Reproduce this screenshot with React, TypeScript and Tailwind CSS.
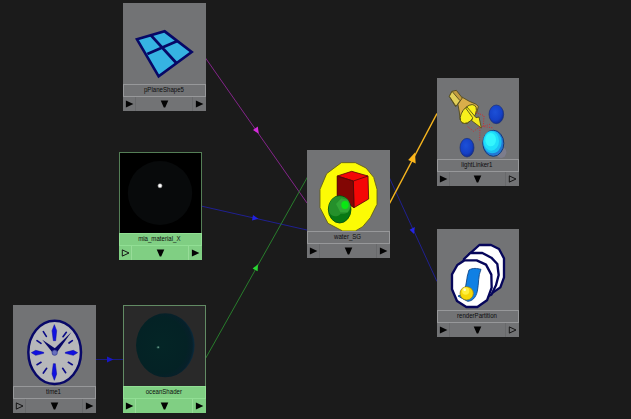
import type { ReactNode } from "react";

type NodeProps = {
  place: string;
  label: string;
  view: string;
  selected?: boolean;
  openLeft?: boolean;
  openRight?: boolean;
  art: string;
  children: ReactNode;
};

function Arrow({ open, down }: { open?: boolean; down?: boolean }) {
  return (
    <svg width="9" height="8" viewBox="0 0 9 8" className="block shrink-0">
      <path
        d={down ? "M0.7 0.5H8.3L5.2 7.6H3.8Z" : open ? "M1.3 0.9L8 4L1.3 7.1Z" : "M0.9 0.4L8.4 4L0.9 7.6Z"}
        fill={open ? "none" : "#030303"}
        stroke={open ? "#161616" : "none"}
        strokeWidth="1"
      />
    </svg>
  );
}

function GraphNode({ place, label, view, selected, openLeft, openRight, art, children }: NodeProps) {
  const body = selected ? "bg-[#80cf83]" : "bg-[#727375]";
  const edge = selected ? "border-[#91df94]" : "border-[#97989a]";
  const split = selected ? "border-[#97dc98]" : "border-[#68696b]";
  return (
    <section className={`absolute flex h-[108px] flex-col ${place} ${body}`}>
      <div className={`h-[81px] shrink-0 ${art}`}>
        <svg viewBox={view} width="100%" height="81" preserveAspectRatio="none" className="block">
          {children}
        </svg>
      </div>
      <div className={`flex h-[13px] shrink-0 items-center justify-center border ${edge}`}>
        <span className="relative -left-px -top-px scale-x-[0.87] whitespace-nowrap text-[7px] leading-none text-[#0c0d0e]">{label}</span>
      </div>
      <div className="flex h-[14px] items-stretch">
        <div className={`flex w-[13px] items-center justify-center border-r ${split}`}>
          <Arrow open={openLeft} />
        </div>
        <div className="flex flex-1 items-center justify-center">
          <Arrow down />
        </div>
        <div className={`flex w-[14px] items-center justify-center border-l pr-px ${split}`}>
          <Arrow open={openRight} />
        </div>
      </div>
    </section>
  );
}

function Connections() {
  return (
    <svg className="absolute inset-0" width="631" height="419" viewBox="0 0 631 419" fill="none">
      <g strokeWidth="1">
        <path d="M205.5 58L307 203" stroke="#84258a" />
        <path d="M201 206L307 230" stroke="#202090" />
        <path d="M205.5 358.5L307.5 177" stroke="#287d2c" />
        <path d="M95 359.5H123" stroke="#1b1b83" />
        <path d="M389.5 178L437 281.5" stroke="#202090" />
      </g>
      <path d="M389.5 203.5L437 113.5" stroke="#f6b51f" strokeWidth="1.5" />
      <path d="M258.8 133.8L253 130L257.8 126.5Z" fill="#d42bdb" />
      <path d="M258.5 218.8L252 220.4L253 215Z" fill="#2222e2" />
      <path d="M258 264.2L252.6 268.5L257.6 271.3Z" fill="#29d732" />
      <path d="M113.5 359.5L107 362.5V356.5Z" fill="#1818c4" />
      <path d="M415 152.5L408.2 160L415.7 163.5Z" fill="#fbb51b" />
      <path d="M414 234L409.6 229.7L414.8 227Z" fill="#2525e4" />
    </svg>
  );
}

function PlaneArt() {
  return (
    <g stroke="#070866" strokeWidth="8" strokeLinejoin="miter">
      <path d="M66 118L149 94L230 156L131 229Z" fill="#36b3e2" />
      <path d="M108 106L184 189M97 162L187 123" fill="none" strokeWidth="8.5" />
    </g>
  );
}

function MaterialArt() {
  return (
    <>
      <ellipse cx="150" cy="141" rx="99" ry="96" fill="#080a0b" />
      <circle cx="150" cy="119" r="7.5" fill="#777" />
      <circle cx="150" cy="119" r="5.3" fill="#fff" />
    </>
  );
}

function ClockArt() {
  return (
    <>
      <ellipse cx="149" cy="157" rx="79" ry="95" fill="#b7b8ba" stroke="#080868" strokeWidth="7.5" />
      <g fill="#1010e0" stroke="#0a0aa0" strokeWidth="1.5">
        <path d="M148 74L155 92L152 122H145L141 92Z" />
        <path d="M148 241L155 222L151 191H145L141 222Z" />
        <path d="M79 158L92 151L116 157V160L92 166Z" />
        <path d="M218 158L205 151L181 157V160L205 166Z" />
      </g>
      <path
        d="M115 95L124 109M184 97L174 110M96 122L108 130M108 187L96 194M125 205L115 219M173 205L182 218M190 187L202 194M192 129L202 122"
        stroke="#0c0c88"
        strokeWidth="5"
        strokeLinecap="round"
      />
      <path d="M199 97L154 160L143 151Z" fill="#080868" />
      <path d="M112 119L154 148L146 162Z" fill="#080868" />
      <circle cx="149" cy="158" r="8" fill="#6870bd" stroke="#303690" strokeWidth="2" />
    </>
  );
}

function OceanArt() {
  return (
    <>
      <defs>
        <radialGradient id="ocean-ball" cx="0.43" cy="0.5" r="0.58">
          <stop offset="0" stopColor="#042526" />
          <stop offset="0.75" stopColor="#042225" />
          <stop offset="0.91" stopColor="#07202a" />
          <stop offset="1" stopColor="#0b2d43" />
        </radialGradient>
      </defs>
      <ellipse cx="151" cy="133" rx="90" ry="96" fill="url(#ocean-ball)" />
      <circle cx="129" cy="139" r="5" fill="#17433e" />
      <circle cx="129" cy="139" r="2.3" fill="#83b3a1" />
    </>
  );
}

function ShadingGroupArt() {
  return (
    <g strokeWidth="2.5" strokeLinejoin="round">
      <path d="M124 53H166L198 69L221 97L231 133V178L211 218L188 245L166 258H128L84 235L60 188V133L80 86Z" fill="#fcfb05" stroke="#605b15" />
      <path d="M112 93L155 79L204 93L206 162L162 188L112 153Z" fill="#f40706" stroke="#590a08" />
      <path d="M112 93L160 108L162 188L112 153Z" fill="#820604" stroke="#590a08" />
      <path d="M112 93L160 108L204 93M160 108L162 188" fill="none" stroke="#590a08" />
      <ellipse cx="119" cy="193" rx="34" ry="41" fill="#087914" stroke="#064d10" />
      <path d="M87 186C89 169 98 154 119 154C141 155 151 169 151 188C148 202 139 207 122 206C112 218 95 217 87 201Z" fill="#25902b" />
      <path d="M108 177L124 160L143 164L152 184L143 202H121Z" fill="#32a636" />
      <ellipse cx="135" cy="180" rx="11" ry="12" fill="#09e713" />
    </g>
  );
}

function LightLinkerArt() {
  return (
    <>
      <defs>
        <radialGradient id="blue-orb" cx="0.42" cy="0.38" r="0.62">
          <stop offset="0" stopColor="#1c50d8" />
          <stop offset="0.7" stopColor="#1440c6" />
          <stop offset="1" stopColor="#122d94" />
        </radialGradient>
      </defs>
      <g stroke="#49451b" strokeWidth="2.5" strokeLinejoin="round">
        <path d="M82 88L97 76L118 88L139 97L145 104L140 122L112 155L97 153L90 142L88 120Z" fill="#d9ae4a" />
        <path d="M58 73L66 58L79 55L97 78L84 96L76 103Z" fill="#c29c41" />
        <path d="M58 73L66 58L90 86L78 103Z" fill="#e2cf58" />
        <ellipse cx="115" cy="126" rx="19" ry="32" transform="rotate(36 115 126)" fill="#f8f01c" />
        <path d="M107 108L128 137L125 146L154 168L147 135L138 137L111 105Z" fill="#f3e91d" />
      </g>
      <g fill="none" stroke="#c83034" strokeWidth="3" strokeDasharray="3 4">
        <path d="M137 121L162 131L160 164L187 167M113 164L131 178L151 163M150 167L149 208M157 164L182 156" />
      </g>
      <ellipse cx="213" cy="241" rx="16" ry="17" fill="#7f8092" opacity=".8" />
      <ellipse cx="199" cy="127" rx="22" ry="28" fill="url(#blue-orb)" stroke="#172f78" strokeWidth="2" />
      <ellipse cx="111" cy="227" rx="21" ry="28" fill="url(#blue-orb)" stroke="#172f78" strokeWidth="2" />
      <ellipse cx="190" cy="214" rx="31.5" ry="39" fill="#2378d4" stroke="#143b78" strokeWidth="3" />
      <ellipse cx="187" cy="210" rx="28" ry="34" fill="#1cbdf0" />
      <ellipse cx="184" cy="207" rx="23" ry="29" fill="#20e0fa" />
      <ellipse cx="182" cy="203" rx="16" ry="20" fill="#34f6fd" />
    </>
  );
}

function PartitionArt() {
  return (
    <>
      <g fill="#fff" stroke="#06065a" strokeWidth="7" strokeLinejoin="round">
        <path d="M148 63H183L207 75L222 103V160L211 190L184 209L145 205L115 178L105 133L117 91Z" />
        <path d="M121 87H157L184 101L202 120L206 153L198 184L184 212L147 228L108 200L96 150L102 105Z" />
        <path d="M104 109H140L168 122L184 152L185 191L171 229L142 249H109L81 231L66 196V151L82 123Z" />
      </g>
      <path d="M117 138C129 131 141 133 153 136C144 155 147 178 142 202C137 222 127 231 113 232L98 224L84 216C107 212 108 178 112 156Z" fill="#1080e4" stroke="#073f82" strokeWidth="2.5" />
      <circle cx="110" cy="208" r="20" fill="#f6d707" stroke="#8d7617" strokeWidth="2" />
      <circle cx="107" cy="201" r="11" fill="#ffef3d" />
      <circle cx="104" cy="197" r="4" fill="#fffbd0" />
    </>
  );
}

export default function App() {
  return (
    <main className="relative h-[419px] w-[631px] overflow-hidden bg-[#1b1b1b] font-['Liberation_Sans',Arial,sans-serif]">
      <Connections />
      <GraphNode place="left-[123px] top-[3px] w-[83px]" label="pPlaneShape5" view="24 9 249 243" art="">
        <PlaneArt />
      </GraphNode>
      <GraphNode place="left-[119px] top-[152px] w-[83px]" label="mia_material_X" view="27 21 249 243" art="border border-b-0 border-[#547e56] bg-black" selected openLeft>
        <MaterialArt />
      </GraphNode>
      <GraphNode place="left-[13px] top-[305px] w-[83px]" label="time1" view="24 15 249 243" art="" openLeft>
        <ClockArt />
      </GraphNode>
      <GraphNode place="left-[123px] top-[305px] w-[83px]" label="oceanShader" view="24 15 249 243" art="border border-b-0 border-[#628b64] bg-[#292929]" selected>
        <OceanArt />
      </GraphNode>
      <GraphNode place="left-[307px] top-[150px] w-[83px]" label="water_SG" view="21 15 249 243" art="">
        <ShadingGroupArt />
      </GraphNode>
      <GraphNode place="left-[437px] top-[78px] w-[82px]" label="lightLinker1" view="21 18 246 243" art="" openRight>
        <LightLinkerArt />
      </GraphNode>
      <GraphNode place="left-[437px] top-[229px] w-[82px]" label="renderPartition" view="21 15 246 243" art="" openRight>
        <PartitionArt />
      </GraphNode>
    </main>
  );
}
